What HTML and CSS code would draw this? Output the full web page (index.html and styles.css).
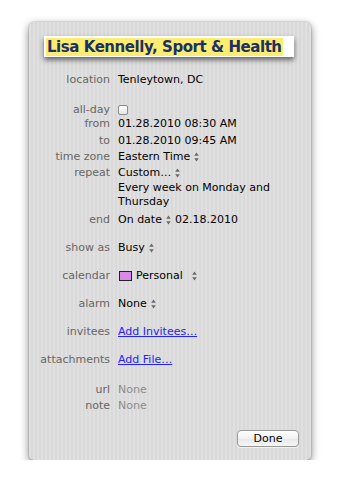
FILE: index.html
```html
<!DOCTYPE html>
<html>
<head>
<meta charset="utf-8">
<link rel="stylesheet" href="styles.css">
</head>
<body>
<div class="panel">
  <div class="title"><span class="hl">Lisa Kennelly, Sport &amp; Health</span></div>
  <div class="fields">
    <div class="row"><span class="lbl">location</span><span class="val">Tenleytown, DC</span></div>

    <div class="row row-allday"><span class="lbl">all-day</span><span class="val"><span class="checkbox"></span></span></div>
    <div class="row"><span class="lbl">from</span><span class="val">01.28.2010 08:30 AM</span></div>
    <div class="row row-to"><span class="lbl">to</span><span class="val">01.28.2010 09:45 AM</span></div>
    <div class="row"><span class="lbl">time zone</span><span class="val">Eastern Time <svg class="step" viewBox="0 0 5 10"><path d="M2.5 0.5 L4.8 3.8 H0.2 Z M2.5 9.5 L4.8 6.2 H0.2 Z"/></svg></span></div>
    <div class="row"><span class="lbl">repeat</span><span class="val">Custom… <svg class="step" viewBox="0 0 5 10"><path d="M2.5 0.5 L4.8 3.8 H0.2 Z M2.5 9.5 L4.8 6.2 H0.2 Z"/></svg></span></div>
    <div class="row row-desc"><span class="lbl"></span><span class="val desc">Every week on Monday and Thursday</span></div>
    <div class="row row-end"><span class="lbl">end</span><span class="val">On date <svg class="step" viewBox="0 0 5 10"><path d="M2.5 0.5 L4.8 3.8 H0.2 Z M2.5 9.5 L4.8 6.2 H0.2 Z"/></svg> 02.18.2010</span></div>

    <div class="row row-group"><span class="lbl">show as</span><span class="val">Busy <svg class="step" viewBox="0 0 5 10"><path d="M2.5 0.5 L4.8 3.8 H0.2 Z M2.5 9.5 L4.8 6.2 H0.2 Z"/></svg></span></div>
    <div class="row row-group"><span class="lbl">calendar</span><span class="val"><span class="swatch"></span>Personal <svg class="step step-far" viewBox="0 0 5 10"><path d="M2.5 0.5 L4.8 3.8 H0.2 Z M2.5 9.5 L4.8 6.2 H0.2 Z"/></svg></span></div>
    <div class="row row-group"><span class="lbl">alarm</span><span class="val">None <svg class="step" viewBox="0 0 5 10"><path d="M2.5 0.5 L4.8 3.8 H0.2 Z M2.5 9.5 L4.8 6.2 H0.2 Z"/></svg></span></div>
    <div class="row row-group"><span class="lbl">invitees</span><span class="val"><a class="link" href="#">Add Invitees…</a></span></div>
    <div class="row row-group"><span class="lbl">attachments</span><span class="val"><a class="link" href="#">Add File…</a></span></div>

    <div class="row row-url"><span class="lbl">url</span><span class="val muted">None</span></div>
    <div class="row"><span class="lbl">note</span><span class="val muted">None</span></div>
  </div>
  <div class="footer"><button class="done">Done</button></div>
</div>
</body>
</html>
```

FILE: styles.css
```css
html, body {
  margin: 0;
  padding: 0;
  background: #ffffff;
}

body {
  font-family: "DejaVu Sans", "Liberation Sans", sans-serif;
  font-size: 11px;
  color: #000;
}

.panel {
  box-sizing: border-box;
  margin: 22px 0 0 29px;
  width: 282px;
  height: 438px;
  border-radius: 5px;
  background-color: #dddddd;
  background-image: repeating-linear-gradient(to right, #e0e0e0 0, #e0e0e0 2px, #d9d9d9 2px, #d9d9d9 4px);
  box-shadow: 0 3px 9px rgba(0, 0, 0, 0.5), 0 0 0 1px rgba(0, 0, 0, 0.08);
  display: flex;
  flex-direction: column;
}

.title {
  box-sizing: border-box;
  margin: 14px 0 0 15px;
  width: 250px;
  height: 21px;
  padding: 2px 0 0 2px;
  background: #ffffff;
  box-shadow: 0 3px 5px rgba(0, 0, 0, 0.55);
}

.hl {
  display: inline-block;
  height: 18px;
  line-height: 18px;
  padding: 0 1px;
  background: #fcec72;
  color: #1b3063;
  font-weight: bold;
  font-size: 15px;
  letter-spacing: -0.45px;
}

.fields {
  margin-top: 15px;
}

.row {
  display: grid;
  grid-template-columns: 81px auto;
  column-gap: 8px;
  line-height: 16px;
  min-height: 16px;
}

.lbl {
  text-align: right;
  color: #666666;
  white-space: nowrap;
}

.val {
  white-space: nowrap;
  display: flex;
  align-items: center;
}

.row-allday {
  margin-top: 15px;
  height: 13px;
  min-height: 13px;
  line-height: 13px;
}

.row-to {
  margin-top: 1px;
}

.row-desc {
  line-height: 14px;
}

.desc {
  white-space: normal;
  display: block;
  width: 160px;
}

.row-end {
  margin-top: 3px;
}

.row-group {
  margin-top: 12px;
}

.row-url {
  margin-top: 14px;
}

.checkbox {
  display: inline-block;
  box-sizing: border-box;
  width: 10px;
  height: 10px;
  margin-top: 1px;
  border: 1px solid #8e8e8e;
  border-radius: 2px;
  background: linear-gradient(#ffffff, #e6e6e6);
}

.step {
  width: 5px;
  height: 10px;
  margin-left: 4px;
  fill: #6a6a6a;
}

.step-far {
  margin-left: 9px;
}

.row-end .step {
  margin-right: 4px;
}

.swatch {
  display: inline-block;
  box-sizing: border-box;
  width: 13px;
  height: 10px;
  margin: 0 4px 0 1px;
  background: #d98ae8;
  border: 1px solid #222;
}

.link {
  color: #2323ff;
  text-decoration: underline;
}

.muted {
  color: #8c8c8c;
}

.footer {
  margin-top: auto;
  display: flex;
  justify-content: flex-end;
  padding: 0 12px 13px 0;
}

.done {
  box-sizing: border-box;
  width: 62px;
  height: 17px;
  padding: 0;
  font-family: "DejaVu Sans", "Liberation Sans", sans-serif;
  font-size: 11px;
  line-height: 15px;
  color: #000;
  border: 1px solid #999;
  border-radius: 4px;
  background: linear-gradient(#ffffff, #f1f1f1 50%, #e8e8e8 51%, #f6f6f6);
  box-shadow: 0 1px 0 rgba(255, 255, 255, 0.6);
}
```
